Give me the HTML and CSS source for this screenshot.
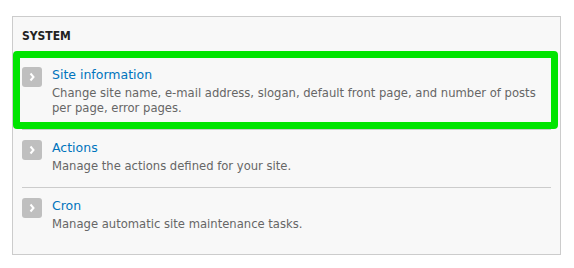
FILE: index.html
```html
<!DOCTYPE html>
<html lang="en">
<head>
  <meta charset="UTF-8" />
  <title>System</title>
  <link rel="stylesheet" href="styles.css">
</head>
<body>

<div class="panel">
  <h3 class="panel-title">System</h3>
  <ul class="admin-list">
    <li class="highlight">
      <span class="icon"><svg width="20" height="20" viewBox="0 0 20 20"><rect width="20" height="20" rx="3" fill="#bfbfbf"/><polyline points="8.5,6.5 11.5,10 8.5,13.5" fill="none" stroke="#fff" stroke-width="2"/></svg></span>
      <div class="item-text">
        <a href="#" class="item-title">Site information</a>
        <div class="item-desc">Change site name, e-mail address, slogan, default front page, and number of posts per page, error pages.</div>
      </div>
    </li>
    <li>
      <span class="icon"><svg width="20" height="20" viewBox="0 0 20 20"><rect width="20" height="20" rx="3" fill="#bfbfbf"/><polyline points="8.5,6.5 11.5,10 8.5,13.5" fill="none" stroke="#fff" stroke-width="2"/></svg></span>
      <div class="item-text">
        <a href="#" class="item-title">Actions</a>
        <div class="item-desc">Manage the actions defined for your site.</div>
      </div>
    </li>
    <li>
      <span class="icon"><svg width="20" height="20" viewBox="0 0 20 20"><rect width="20" height="20" rx="3" fill="#bfbfbf"/><polyline points="8.5,6.5 11.5,10 8.5,13.5" fill="none" stroke="#fff" stroke-width="2"/></svg></span>
      <div class="item-text">
        <a href="#" class="item-title">Cron</a>
        <div class="item-desc">Manage automatic site maintenance tasks.</div>
      </div>
    </li>
  </ul>
</div>

</body>
</html>
```

FILE: styles.css
```css
body {
  font-family: 'DejaVu Sans', Verdana, sans-serif;
  background: #fff;
  margin: 0;
  padding: 16px 0 0 12px;
}
.panel {
  width: 529px;
  border: 1px solid #ccc;
  background: #f8f8f8;
  padding: 11px 9px 9px 9px;
}
.panel-title {
  margin: 0;
  font-family: 'DejaVu Sans Condensed', 'DejaVu Sans', sans-serif;
  font-size: 12px;
  line-height: 16px;
  font-weight: bold;
  text-transform: uppercase;
  color: #222;
}
.admin-list {
  list-style: none;
  margin: 13px 0 0 0;
  padding: 0;
}
.admin-list li {
  position: relative;
  display: flex;
  gap: 10px;
  padding: 10px 0 13px 0;
  border-bottom: 1px solid #ccc;
}
.admin-list li:last-child {
  border-bottom: none;
}
.admin-list li.highlight::after {
  content: "";
  position: absolute;
  top: -6px;
  left: -9px;
  right: -7px;
  bottom: 0;
  border: 7px solid #00e500;
  border-radius: 4px;
}
.icon {
  flex: none;
  width: 20px;
  height: 20px;
}
.icon svg {
  display: block;
}
.item-title {
  display: block;
  font-size: 12.5px;
  line-height: 16px;
  color: #0074bd;
  text-decoration: none;
}
.item-desc {
  margin-top: 3px;
  font-size: 11.6px;
  line-height: 15px;
  color: #666;
}
```
